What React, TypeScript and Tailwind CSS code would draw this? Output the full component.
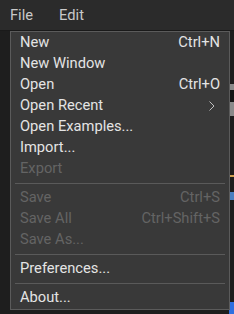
import React from 'react';

type Item =
  | { sep: true }
  | { label: string; shortcut?: string; submenu?: boolean; disabled?: boolean; sep?: false };

const items: Item[] = [
  { label: 'New', shortcut: 'Ctrl+N' },
  { label: 'New Window' },
  { label: 'Open', shortcut: 'Ctrl+O' },
  { label: 'Open Recent', submenu: true },
  { label: 'Open Examples...' },
  { label: 'Import...' },
  { label: 'Export', disabled: true },
  { sep: true },
  { label: 'Save', shortcut: 'Ctrl+S', disabled: true },
  { label: 'Save All', shortcut: 'Ctrl+Shift+S', disabled: true },
  { label: 'Save As...', disabled: true },
  { sep: true },
  { label: 'Preferences...' },
  { sep: true },
  { label: 'About...' },
];

const App: React.FC = () => {
  return (
    <div
      className="relative w-[234px] h-[314px] overflow-hidden bg-[#1e1e1e] text-[14.7px]"
      style={{ fontFamily: 'Roboto, "Liberation Sans", sans-serif' }}
    >
      {/* Menu bar */}
      <div className="flex items-center h-[31px] bg-[#2b2b2b] border-b border-[#1a1a1a] text-[#c9c9c9]">
        <span className="pl-[10px]">File</span>
        <span className="pl-[26px]">Edit</span>
      </div>

      {/* Background bits peeking out from behind the menu */}
      <div className="absolute left-[229px] top-[84px] w-[5px] h-[32px] bg-[#8a8a8a]">
        <div className="mt-[6px] h-[12px] bg-[#151515]" />
      </div>
      <div className="absolute left-[230px] top-[175px] w-[4px] h-[2px] bg-[#d0a050]" />
      <div className="absolute left-[230px] top-[192px] w-[4px] h-[8px] bg-[#4a7fc0]" />
      <div className="absolute left-[229px] top-[302px] w-[5px] h-[12px] bg-[#2f6fe0]" />

      {/* Dropdown */}
      <div className="absolute left-[10px] top-[31px] w-[220px] bg-[#393939] border border-[#5b5b5b] pb-px">
        {items.map((it, i) =>
          it.sep ? (
            <div key={i} className="h-[8px] flex items-center px-[4px]">
              <div className="w-full h-px bg-[#5a5a5a]" />
            </div>
          ) : (
            <div
              key={i}
              className={`h-[21px] flex items-center justify-between px-[9px] ${
                it.disabled ? 'text-[#646464]' : 'text-[#e4e4e4]'
              }`}
            >
              <span>{it.label}</span>
              {it.shortcut && <span>{it.shortcut}</span>}
              {it.submenu && (
                <svg width="8" height="12" viewBox="0 0 8 12" className="mr-[4px]">
                  <path d="M1.5 1.5 L6 6 L1.5 10.5" fill="none" stroke="#bdbdbd" strokeWidth="1" />
                </svg>
              )}
            </div>
          )
        )}
      </div>
    </div>
  );
};

export default App;
